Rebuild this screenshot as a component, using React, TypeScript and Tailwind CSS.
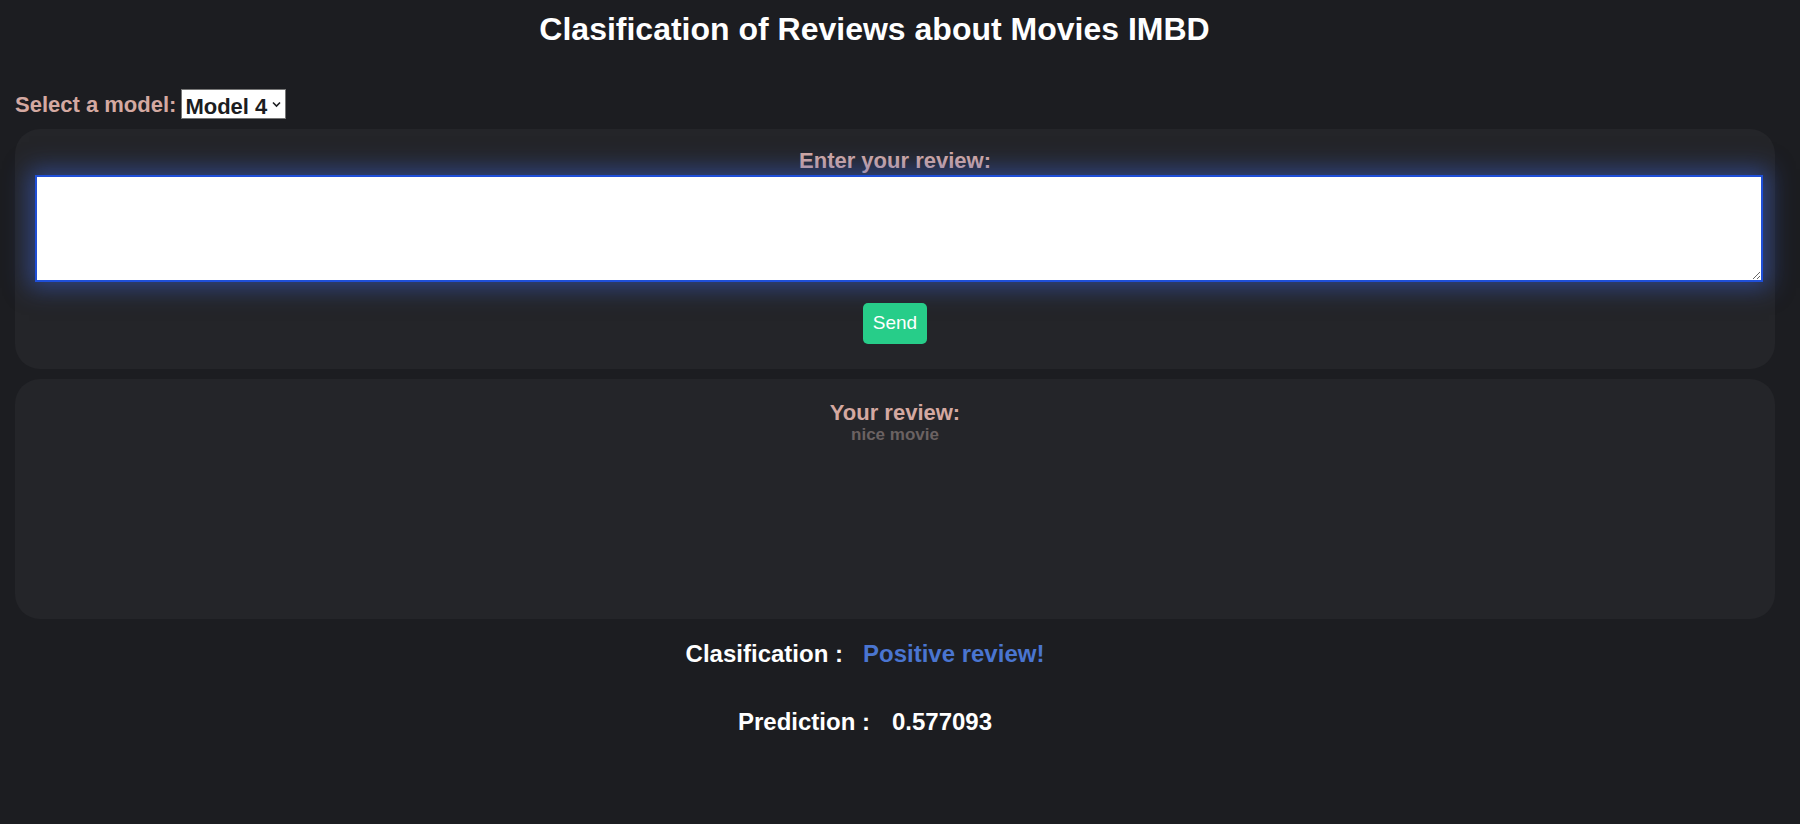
import React from "react";

export default function App() {
  return (
    <div className="w-full min-h-[824px] bg-[#1c1d21] flex flex-col font-['Liberation_Sans',Arial,sans-serif]">
      <h1 className="mt-[11px] pr-[51px] text-center text-[32px] leading-[37px] font-bold text-white">
        Clasification of Reviews about Movies IMBD
      </h1>

      <div className="mt-[41px] ml-[15px] h-[30px] flex items-center gap-[5px]">
        <span className="text-[22px] font-bold text-[#d4a9a1]">Select a model:</span>
        <div className="relative h-[30px] w-[105px] bg-white border border-[#767676] flex items-center">
          <select
            defaultValue="4"
            className="appearance-none w-full h-full bg-transparent pl-[3px] text-[22px] font-bold text-[#1c1d21] outline-none"
          >
            <option value="1">Model 1</option>
            <option value="2">Model 2</option>
            <option value="3">Model 3</option>
            <option value="4">Model 4</option>
          </select>
          <svg className="absolute right-[4px] top-[11px] pointer-events-none" width="9" height="7" viewBox="0 0 9 7">
            <path d="M1 1.5 L4.5 5 L8 1.5" stroke="#1c1d21" strokeWidth="1.6" fill="none" />
          </svg>
        </div>
      </div>

      <div className="mt-[10px] ml-[15px] w-[1760px] h-[240px] rounded-[25px] bg-[#242529] flex flex-col items-center pt-[19px]">
        <label className="text-[22px] leading-[25px] font-bold text-[#d4a9a1]">Enter your review:</label>
        <div className="w-full pl-[20px] pr-[12px] mt-[2px]">
          <textarea className="block w-[1728px] h-[107px] bg-white border-2 border-[#1f4fd8] outline-none shadow-[0_0_22px_6px_rgba(60,100,220,0.5)]" />
        </div>
        <button className="mt-[21px] w-[64px] h-[41px] rounded-[5px] bg-[#27cd89] text-white text-[19px]">
          Send
        </button>
      </div>

      <div className="mt-[10px] ml-[15px] w-[1760px] h-[240px] rounded-[25px] bg-[#242529] flex flex-col items-center pt-[21px]">
        <span className="text-[22px] leading-[25px] font-bold text-[#d4a9a1]">Your review:</span>
        <span className="text-[17px] leading-[20px] font-bold text-[#6b6262]">nice movie</span>
      </div>

      <div className="mt-[21px] pr-[70px] flex justify-center gap-[20px] text-[24px] leading-[28px] font-bold">
        <span className="text-white">Clasification :</span>
        <span className="text-[#4a75d0]">Positive review!</span>
      </div>

      <div className="mt-[40px] pr-[70px] flex justify-center gap-[22px] text-[24px] leading-[28px] font-bold text-white">
        <span>Prediction :</span>
        <span>0.577093</span>
      </div>
    </div>
  );
}
